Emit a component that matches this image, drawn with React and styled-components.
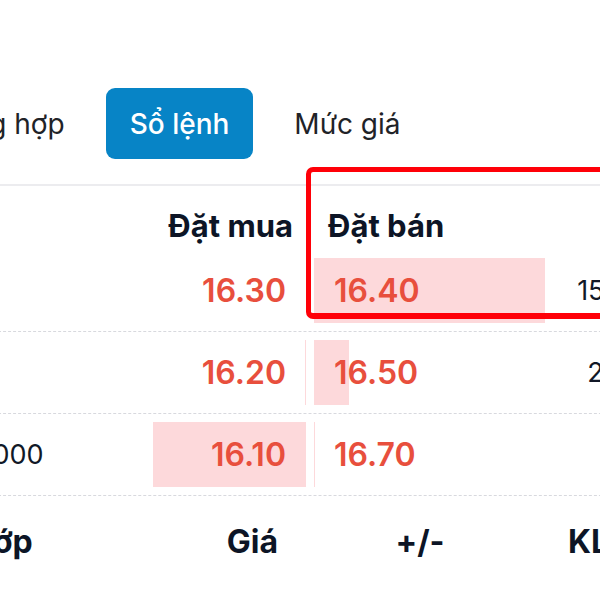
import React from 'react'
import styled, { createGlobalStyle } from 'styled-components'

const GlobalStyle = createGlobalStyle`
  html, body {
    margin: 0;
    padding: 0;
    background: #ffffff;
  }
  body {
    font-family: Inter, "Noto Sans", "Liberation Sans", sans-serif;
    color: #111827;
  }
`

const Screen = styled.div`
  position: relative;
  width: 600px;
  height: 600px;
  overflow: hidden;
  background: #fff;
`

const TabBar = styled.div`
  display: flex;
  align-items: center;
  gap: 17px;
  margin-left: -84px;
  padding: 88px 0 25px 0;
  border-bottom: 2px solid #ececef;
  width: 720px;
`

const Tab = styled.div`
  display: flex;
  align-items: center;
  height: 71px;
  padding: 0 24px;
  border-radius: 9px;
  font-size: 28px;
  font-weight: ${p => (p.$active ? 500 : 400)};
  color: ${p => (p.$active ? '#ffffff' : '#1f2328')};
  background: ${p => (p.$active ? '#0784c6' : 'transparent')};
  white-space: nowrap;
`

const Book = styled.div`
  width: 704px;
  margin-left: -42px;
`

const Row = styled.div`
  display: grid;
  grid-template-columns: 1fr 1fr;
  column-gap: 8px;
  height: ${p => (p.$head ? '64px' : '81px')};
  border-bottom: ${p => (p.$head ? 'none' : '1px dashed #d8d9de')};
`

const Side = styled.div`
  position: relative;
  display: flex;
  align-items: center;
  justify-content: space-between;
  flex-direction: ${p => (p.$sell ? 'row-reverse' : 'row')};
`

const HeadCell = styled.div`
  display: flex;
  align-items: flex-end;
  justify-content: ${p => (p.$sell ? 'flex-start' : 'flex-end')};
  padding: ${p => (p.$sell ? '0 0 6px 14px' : '0 13px 6px 0')};
  font-size: 31px;
  font-weight: 700;
  color: #0d1526;
`

const Bar = styled.div`
  position: absolute;
  top: 8px;
  bottom: 8px;
  ${p => (p.$sell ? 'left: 0;' : 'right: 0;')}
  background: #fdd9db;
`

const Price = styled.span`
  position: relative;
  font-size: 32px;
  font-weight: 600;
  color: #e84f3d;
  ${p => (p.$sell ? 'padding-left: 20px;' : 'padding-right: 20px;')}
`

const Volume = styled.span`
  position: relative;
  font-size: 27px;
  font-weight: 400;
  color: #111827;
`

const TradeHead = styled.div`
  display: grid;
  grid-template-columns: 194px 134px 284px 1fr;
  width: 712px;
  margin-left: -50px;
  padding-top: 26px;
  font-size: 32px;
  font-weight: 700;
  color: #0d1526;
`

const Col = styled.div`
  text-align: ${p => p.$align || 'left'};
  padding-left: ${p => p.$pl || 0}px;
`

const Highlight = styled.div`
  position: absolute;
  left: 306px;
  top: 167px;
  width: 330px;
  height: 141px;
  border: 5px solid #ff0008;
  border-top-width: 5px;
  border-bottom-width: 6px;
  border-radius: 7px;
  pointer-events: none;
`

const rows = [
  { buyVol: '', buy: '16.30', buyBar: 0, sell: '16.40', sellBar: 231, sellVol: '15,000' },
  { buyVol: '', buy: '16.20', buyBar: 1, sell: '16.50', sellBar: 35, sellVol: '2,000' },
  { buyVol: '12,000', buy: '16.10', buyBar: 153, sell: '16.70', sellBar: 1, sellVol: '' },
]

export default function App() {
  return (
    <Screen>
      <GlobalStyle />
      <TabBar>
        <Tab>Tổng hợp</Tab>
        <Tab $active>Sổ lệnh</Tab>
        <Tab>Mức giá</Tab>
      </TabBar>
      <Book>
        <Row $head>
          <HeadCell>Đặt mua</HeadCell>
          <HeadCell $sell>Đặt bán</HeadCell>
        </Row>
        {rows.map((r, i) => (
          <Row key={i}>
            <Side>
              {r.buyBar > 0 && <Bar style={{ width: r.buyBar }} />}
              <Volume>{r.buyVol}</Volume>
              <Price>{r.buy}</Price>
            </Side>
            <Side $sell>
              {r.sellBar > 0 && <Bar $sell style={{ width: r.sellBar }} />}
              <Volume>{r.sellVol}</Volume>
              <Price $sell>{r.sell}</Price>
            </Side>
          </Row>
        ))}
      </Book>
      <TradeHead>
        <Col>Khớp</Col>
        <Col $align="right">Giá</Col>
        <Col $align="center">+/-</Col>
        <Col $pl={6}>KL</Col>
      </TradeHead>
      <Highlight />
    </Screen>
  )
}
